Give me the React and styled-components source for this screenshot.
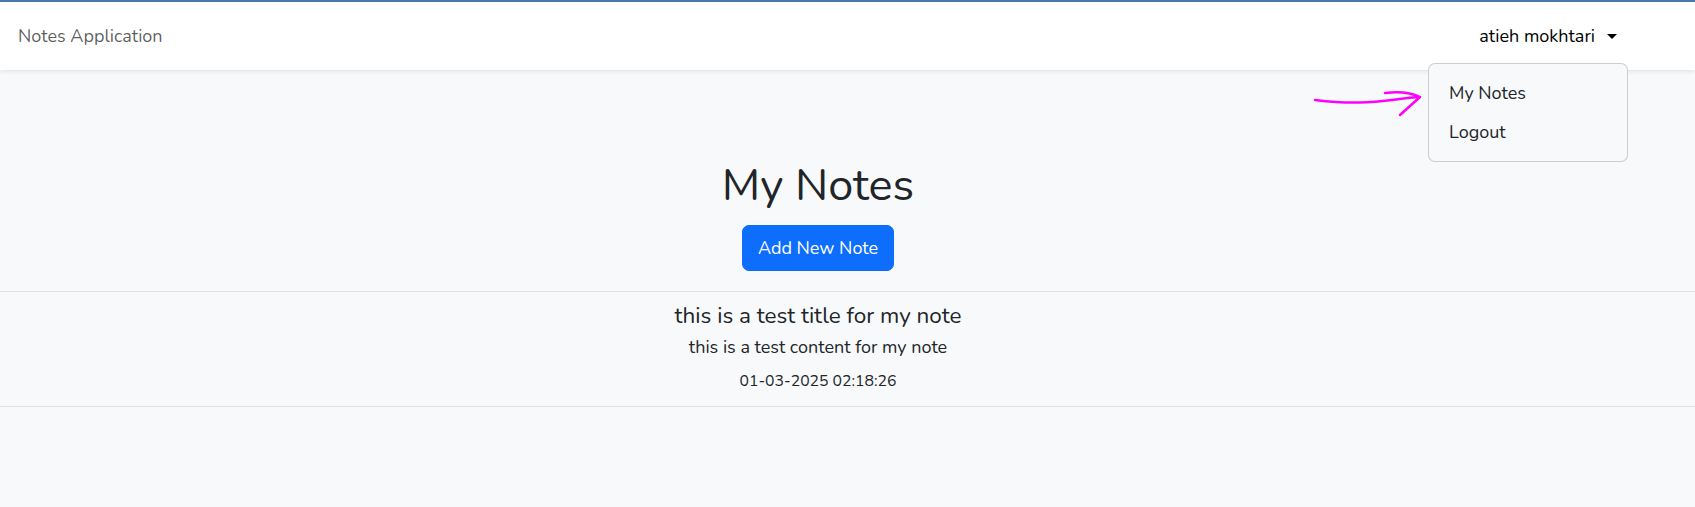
import React from "react";
import styled, { createGlobalStyle } from "styled-components";

const GlobalStyle = createGlobalStyle`
  html, body {
    margin: 0;
    padding: 0;
  }
  body {
    background: #f8f9fa;
    font-family: "Nunito", "Lato", "Open Sans", sans-serif;
    color: #212529;
    border-top: 2px solid #4a76ad;
    min-height: 505px;
  }
`;

const Navbar = styled.nav`
  height: 68px;
  background: #fff;
  display: flex;
  align-items: center;
  justify-content: space-between;
  padding-left: 18px;
  box-shadow: 0 2px 4px rgba(0, 0, 0, 0.08);
  position: relative;
  z-index: 2;
`;

const Brand = styled.a`
  font-size: 18px;
  color: rgba(0, 0, 0, 0.65);
  text-decoration: none;
`;

const UserMenu = styled.div`
  position: relative;
  height: 100%;
  display: flex;
  align-items: center;
  margin-right: 67px;
`;

const Toggle = styled.button`
  border: none;
  background: none;
  font: inherit;
  font-size: 18px;
  color: #000;
  padding: 0 11px 0 0;
  display: flex;
  align-items: center;
  cursor: pointer;

  &::after {
    content: "";
    margin-left: 12px;
    border-top: 5px solid #000;
    border-left: 5px solid transparent;
    border-right: 5px solid transparent;
  }
`;

const Menu = styled.ul`
  position: absolute;
  top: 61px;
  right: 0;
  width: 198px;
  margin: 0;
  padding: 9.5px 0;
  list-style: none;
  background: #f8f9fa;
  border: 1px solid rgba(0, 0, 0, 0.175);
  border-radius: 7px;
`;

const MenuItem = styled.li`
  padding: 6px 20px;
  font-size: 18px;
  line-height: 27px;
  color: #212529;
`;

const Arrow = styled.svg`
  position: absolute;
  top: 78px;
  left: 1312px;
`;

const Main = styled.main`
  text-align: center;
  padding-top: 89px;
  padding-right: 59px;
`;

const Heading = styled.h1`
  margin: 0;
  font-size: 45px;
  font-weight: 400;
  line-height: 54px;
`;

const AddButton = styled.button`
  margin-top: 12px;
  font: inherit;
  font-size: 18px;
  line-height: 27px;
  color: #fff;
  background: #0d6efd;
  border: 1px solid #0d6efd;
  border-radius: 7px;
  padding: 8.5px 15px;
  cursor: pointer;
`;

const NoteList = styled.section`
  margin-top: 20px;
  margin-right: -59px;
  border-top: 1px solid #dee2e6;
`;

const Note = styled.article`
  padding: 9.5px 59px 12.5px 0;
  border-bottom: 1px solid #dee2e6;
`;

const NoteTitle = styled.h5`
  margin: 0;
  font-size: 22.5px;
  font-weight: 400;
  line-height: 27px;
`;

const NoteContent = styled.p`
  margin: 5px 0 0;
  font-size: 18px;
  line-height: 27px;
`;

const NoteDate = styled.p`
  margin: 8.5px 0 0;
  font-size: 15.75px;
  line-height: 24px;
`;

const notes = [
  {
    id: 1,
    title: "this is a test title for my note",
    content: "this is a test content for my note",
    date: "01-03-2025 02:18:26",
  },
];

const App = () => {
  return (
    <>
      <GlobalStyle />
      <Navbar>
        <Brand href="#">Notes Application</Brand>
        <UserMenu>
          <Toggle>atieh mokhtari</Toggle>
          <Menu>
            <MenuItem>My Notes</MenuItem>
            <MenuItem>Logout</MenuItem>
          </Menu>
        </UserMenu>
      </Navbar>
      <Arrow width="115" height="42" viewBox="0 0 115 42">
        <path
          d="M3 22 C 20 24, 32 25, 48 24.5 C 70 24, 90 20, 108 19 M 73 15 C 88 13, 100 15, 108 19 L 88 37"
          fill="none"
          stroke="#f0f"
          strokeWidth="2.5"
          strokeLinecap="round"
          strokeLinejoin="round"
        />
      </Arrow>
      <Main>
        <Heading>My Notes</Heading>
        <AddButton>Add New Note</AddButton>
        <NoteList>
          {notes.map((n) => (
            <Note key={n.id}>
              <NoteTitle>{n.title}</NoteTitle>
              <NoteContent>{n.content}</NoteContent>
              <NoteDate>{n.date}</NoteDate>
            </Note>
          ))}
        </NoteList>
      </Main>
    </>
  );
};

export default App;
